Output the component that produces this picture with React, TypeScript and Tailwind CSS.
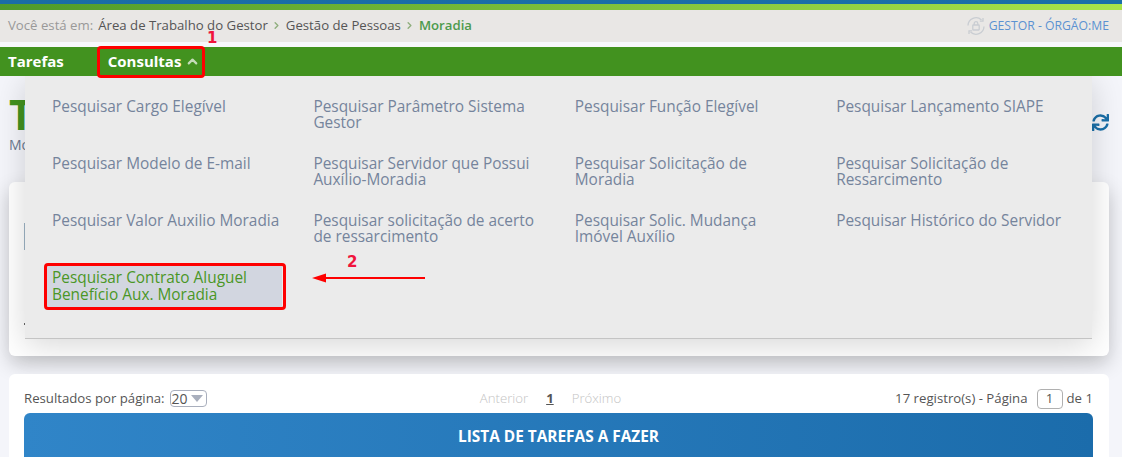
import { ChevronRight, ChevronUp } from 'lucide-react';
import { FaSync } from 'react-icons/fa';

const menuItems = [
  'Pesquisar Cargo Elegível',
  'Pesquisar Parâmetro Sistema Gestor',
  'Pesquisar Função Elegível',
  'Pesquisar Lançamento SIAPE',
  'Pesquisar Modelo de E-mail',
  'Pesquisar Servidor que Possui Auxílio-Moradia',
  'Pesquisar Solicitação de Moradia',
  'Pesquisar Solicitação de Ressarcimento',
  'Pesquisar Valor Auxilio Moradia',
  'Pesquisar solicitação de acerto de ressarcimento',
  'Pesquisar Solic. Mudança Imóvel Auxílio',
  'Pesquisar Histórico do Servidor',
];

function ProfileIcon() {
  return (
    <svg width="18" height="18" viewBox="0 0 18 18" fill="none" stroke="#c9cdd2" strokeWidth="1.3">
      <path d="M1 8.5A8 8 0 0 1 14.5 3" />
      <path d="M17 9.5A8 8 0 0 1 3.5 15" />
      <path d="M16 1v3.2h-3.2M2 17v-3.2h3.2" />
      <rect x="5.8" y="8" width="6.4" height="5" rx="0.5" />
      <path d="M7.2 8V6.4a1.8 1.8 0 0 1 3.6 0V8" />
    </svg>
  );
}

export default function App() {
  return (
    <div className="relative h-[457px] w-[1122px] overflow-hidden bg-[#f4f5fa] font-['Open_Sans',sans-serif]">
      <div className="relative z-20">
        <div className="h-1 bg-gradient-to-r from-[#1a6da5] to-[#1a6fa8]" />
        <div className="h-1.5 bg-gradient-to-r from-[#4e9a2a] to-[#a8e44a]" />

        {/* breadcrumb */}
        <div className="flex h-8 items-center justify-between bg-[#e9e7e5] pl-2 pr-[13px] text-[13.2px]">
          <div className="flex items-center">
            <span className="text-[#999999]">Você está em:</span>
            <span className="ml-[5px] text-[#555555]">Área de Trabalho do Gestor</span>
            <ChevronRight size={11} strokeWidth={3} className="mx-[3.5px] text-[#8fae7d]" />
            <span className="text-[#555555]">Gestão de Pessoas</span>
            <ChevronRight size={11} strokeWidth={3} className="mx-[3.5px] text-[#8fae7d]" />
            <span className="font-semibold text-[#4d9a4d]">Moradia</span>
          </div>
          <div className="flex items-center gap-1 text-[#5b92d1]">
            <ProfileIcon />
            <span className="text-[12.2px]">GESTOR - ÓRGÃO:ME</span>
          </div>
        </div>
        <div className="h-[5px] bg-[#f8f8fc]" />

        {/* nav */}
        <div className="flex h-[29px] items-center bg-[#42921f] pl-2 text-[15px] font-bold text-white">
          <span>Tarefas</span>
          <span className="ml-[44px]">Consultas</span>
          <ChevronUp size={15} strokeWidth={3.5} className="ml-[4px] text-[#c5dcb9]" />
        </div>
      </div>

      {/* page behind the menu */}
      <div className="pl-[9px] pr-[13px]">
        <div className="flex h-[106px] items-start justify-between">
          <div className="pt-[16px]">
            <div className="h-[45px] text-[42px] font-bold leading-[43px] text-[#42921f]">T</div>
            <div className="text-sm leading-4 text-[#6b7a90]">Mo</div>
          </div>
          <FaSync size={17} className="mt-[38px] text-[#1a6fa8]" />
        </div>
        <div className="h-[174px] rounded-md bg-white shadow-[0_8px_20px_rgba(0,0,0,0.2)]" />
        <div className="relative z-20 mt-[18px] h-[100px] rounded-md bg-white pl-[15px] pr-[16px] pt-[13px]">
          <div className="flex h-6 items-center justify-between text-[13.2px] text-[#555555]">
            <div className="flex w-[284px] items-center">
              <span>Resultados por página:</span>
              <span className="ml-[5px] flex h-[17px] w-[37px] items-center justify-between rounded border border-[#a9afbd] pl-[1px] pr-[3px] text-[14px]">
                20
                <span className="h-0 w-0 border-x-[6px] border-t-[7px] border-x-transparent border-t-[#a9afbd]" />
              </span>
            </div>
            <div className="flex items-center font-light text-[#c4c4c4]">
              <span>Anterior</span>
              <span className="mx-[18px] font-bold text-[#555555] underline">1</span>
              <span>Próximo</span>
            </div>
            <div className="flex w-[300px] items-center justify-end">
              <span>17 registro(s) - Página</span>
              <span className="ml-[9px] mr-[4px] flex h-5 w-[26px] items-center justify-center rounded border border-[#b0b0b0]">1</span>
              <span>de 1</span>
            </div>
          </div>
          <div className="mt-[2px] flex h-[60px] items-start justify-center rounded-t-md bg-gradient-to-r from-[#3085c8] to-[#1b6cab] pt-3 text-[15.4px] font-bold text-white">
            LISTA DE TAREFAS A FAZER
          </div>
        </div>
      </div>

      {/* bits of the form showing left of the menu */}
      <div className="absolute left-[24px] top-[223px] h-[27px] w-px bg-[#9db4c5]" />
      <div className="absolute left-[24px] top-[323px] h-[2px] w-px bg-[#666666]" />

      {/* dropdown menu */}
      <div className="absolute left-[25px] top-[76px] z-10 h-[263px] w-[1067px] border-b border-[#c4c4c4] bg-[#ebebeb] pl-[20px] pt-[23px] shadow-[0_6px_30px_rgba(0,0,0,0.16)]">
        <div className="grid grid-cols-[repeat(4,261.4px)] grid-rows-[repeat(3,56.9px)] text-[15.4px] leading-4 text-[#75849c]">
          {menuItems.map(item => (
            <div key={item} className="w-[240px] pl-[7px]">
              {item}
            </div>
          ))}
        </div>
        <div className="-mt-1 ml-[1px] w-[236px] bg-[#d2d6e0] pb-[5px] pl-[6px] pt-[3px] text-[15.4px] leading-[17px] text-[#4a9626]">
          Pesquisar Contrato Aluguel
          <br />
          Benefício Aux. Moradia
        </div>
      </div>

      {/* annotations */}
      <div className="absolute left-[97px] top-[46px] z-30 h-[32px] w-[108px] rounded-sm border-[3px] border-[#fe0000]" />
      <span className="absolute left-[207px] top-[29px] z-30 font-['DejaVu_Sans',sans-serif] text-[15px] leading-[18px] font-bold text-[#f0143c]">1</span>
      <div className="absolute left-[44px] top-[263px] z-30 h-[47px] w-[242px] rounded-sm border-[3px] border-[#fe0000]" />
      <span className="absolute left-[347px] top-[253px] z-30 font-['DejaVu_Sans',sans-serif] text-[15px] leading-[18px] font-bold text-[#f0143c]">2</span>
      <svg className="absolute left-[311px] top-[271px] z-30" width="115" height="14" viewBox="0 0 115 14">
        <path d="M1 7 L15 2.5 L15 6 H114 V8 H15 L15 11.5 Z" fill="#fe0000" />
      </svg>
    </div>
  );
}
